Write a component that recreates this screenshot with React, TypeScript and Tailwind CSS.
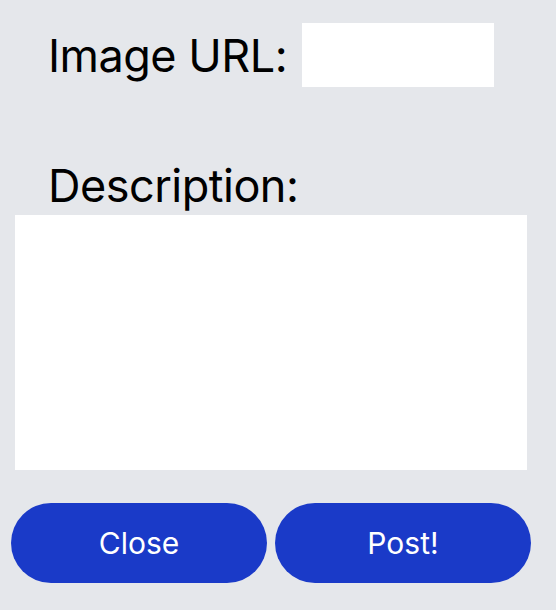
import { useState } from "react";

const App = () => {
  const [url, setUrl] = useState("");
  const [desc, setDesc] = useState("");

  return (
    <div className="w-[556px] h-[610px] bg-[#e5e7eb] font-['Inter','Noto_Sans',sans-serif] text-black">
      <div className="flex items-center pt-[23px] pl-[48px] gap-[15px]">
        <label className="text-[45px] leading-none tracking-[-0.5px]">Image URL:</label>
        <input
          value={url}
          onChange={(e) => setUrl(e.target.value)}
          className="w-[192px] h-[64px] bg-white outline-none px-2 text-xl"
        />
      </div>
      <div className="pl-[48px] mt-[72px] text-[45px] leading-[54px] tracking-[-0.5px]">
        Description:
      </div>
      <textarea
        value={desc}
        onChange={(e) => setDesc(e.target.value)}
        className="block ml-[15px] mt-[2px] w-[512px] h-[255px] bg-white outline-none resize-none p-2 text-xl"
      />
      <div className="flex gap-[8px] pl-[11px] mt-[33px]">
        <button className="w-[256px] h-[80px] rounded-full bg-[#1a3ac8] text-white text-[30px]">
          Close
        </button>
        <button className="w-[256px] h-[80px] rounded-full bg-[#1a3ac8] text-white text-[30px]">
          Post!
        </button>
      </div>
    </div>
  );
};

export default App;
